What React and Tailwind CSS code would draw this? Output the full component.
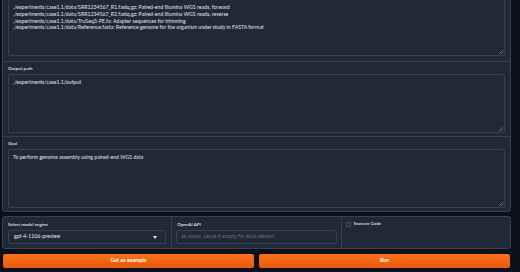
import React from 'react';

const font = { fontFamily: '"Lato", "Noto Sans", sans-serif' };

const Grip = () => (
  <svg
    className="absolute right-[1px] bottom-[1px]"
    width="4"
    height="4"
    viewBox="0 0 4 4"
  >
    <path d="M4 0 L0 4 M4 2 L2 4" stroke="#6b7280" strokeWidth="0.8" />
  </svg>
);

const Area = ({ lines, height }) => (
  <div
    className={`relative rounded-[2px] border border-[#374151] bg-[#1f2937] px-[4px] pt-[4px] text-[5.2px] leading-[6.8px] text-[#e5e7eb] ${height}`}
  >
    {lines.map((l, i) => (
      <div key={i} className="whitespace-nowrap">
        {l}
      </div>
    ))}
    <Grip />
  </div>
);

const Label = ({ children }) => (
  <div className="mb-[2px] h-[6px] text-[4.5px] leading-[6px] font-semibold text-[#e5e7eb]">
    {children}
  </div>
);

export default function App() {
  const inputs = [
    './experiments/case1.1/data/SRR1234567_R1.fastq.gz: Paired-end Illumina WGS reads, forward',
    './experiments/case1.1/data/SRR1234567_R2.fastq.gz: Paired-end Illumina WGS reads, reverse',
    './experiments/case1.1/data/TruSeq3-PE.fa: Adapter sequences for trimming',
    './experiments/case1.1/data/Reference.fasta: Reference genome for the organism under study in FASTA format',
  ];

  return (
    <div className="h-[272px] w-[520px] overflow-hidden bg-[#0b0f19]" style={font}>
      <div className="ml-[2px] mt-[-6px] flex w-[509px] flex-col gap-px overflow-hidden rounded-b-[3px] border border-[#374151] bg-[#374151]">
        <div className="bg-[#1f2937] px-[5px] pt-[4px] pb-[5px]">
          <Area lines={inputs} height="h-[57px]" />
        </div>
        <div className="bg-[#1f2937] px-[5px] pt-[4px] pb-[3px]">
          <Label>Output path</Label>
          <Area lines={['./experiments/case1.1/output']} height="h-[59px]" />
        </div>
        <div className="bg-[#1f2937] px-[5px] pt-[4px] pb-[3px]">
          <Label>Goal</Label>
          <Area lines={['To perform genome assembly using paired-end WGS data']} height="h-[59px]" />
        </div>
      </div>

      <div className="ml-[2px] mt-[4px] grid w-[509px] grid-cols-3 gap-px overflow-hidden rounded-[3px] border border-[#374151] bg-[#374151]">
        <div className="bg-[#1f2937] px-[5px] pt-[5px] pb-[4px]">
          <Label>Select model engine</Label>
          <div className="flex h-[14px] items-center justify-between rounded-[2px] border border-[#374151] bg-[#1f2937] pl-[5px] pr-[8px] text-[5.2px] text-[#e5e7eb]">
            <span>gpt-4-1106-preview</span>
            <svg width="4" height="3" viewBox="0 0 4 3">
              <path d="M0 0 L4 0 L2 3 Z" fill="#e5e7eb" />
            </svg>
          </div>
        </div>
        <div className="bg-[#1f2937] px-[4px] pt-[5px] pb-[4px]">
          <Label>
            <span className="pl-[1px]">OpenAI API</span>
          </Label>
          <div className="flex h-[14px] items-center rounded-[2px] border border-[#374151] bg-[#1f2937] pl-[4px] text-[5.2px] text-[#6b7280]">
            sk-xxxxx. Leave it empty for local version
          </div>
        </div>
        <div className="bg-[#1f2937] px-[4px] pt-[4px] pb-[4px]">
          <div className="flex items-center gap-[3px]">
            <div className="h-[5px] w-[5px] rounded-[1px] border border-[#4b5563] bg-[#1f2937]" />
            <span className="text-[4.5px] leading-[6px] font-semibold text-[#e5e7eb]">Execute Code</span>
          </div>
        </div>
      </div>

      <div className="ml-[3px] mt-[5px] flex w-[507px] gap-[5px]">
        <button className="flex h-[14px] flex-1 items-center justify-center rounded-[2px] bg-gradient-to-b from-[#f97316] to-[#ea580c] text-[5.2px] font-bold text-white">
          Get an example
        </button>
        <button className="flex h-[14px] flex-1 items-center justify-center rounded-[2px] bg-gradient-to-b from-[#f97316] to-[#ea580c] text-[5.2px] font-bold text-white">
          Run
        </button>
      </div>
    </div>
  );
}
